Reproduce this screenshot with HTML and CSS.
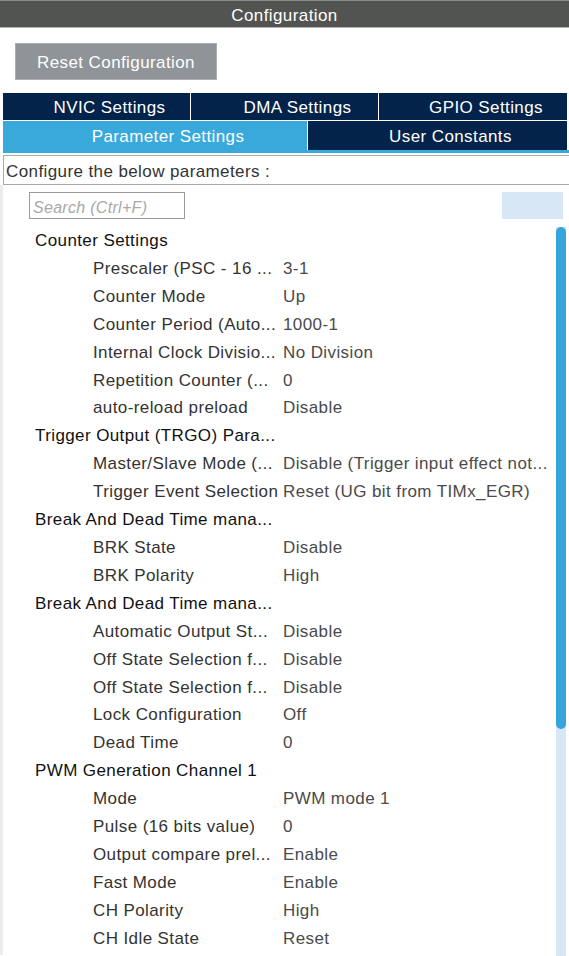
FILE: index.html
```html
<!DOCTYPE html>
<html>
<head>
<meta charset="utf-8">
<link rel="stylesheet" href="styles.css">
</head>
<body>
<div class="titlebar">Configuration</div>
<div class="toolbar"><button class="reset">Reset Configuration</button></div>
<div class="tabs">
  <div class="tabrow row1">
    <div class="tab">NVIC Settings</div>
    <div class="tab">DMA Settings</div>
    <div class="tab">GPIO Settings</div>
  </div>
  <div class="tabrow row2">
    <div class="tab active">Parameter Settings</div>
    <div class="tab">User Constants</div>
  </div>
</div>
<div class="configure">Configure the below parameters :</div>
<div class="panel">
  <div class="searchrow">
    <div class="search">Search (Ctrl+F)</div>
    <div class="searchbtn"></div>
  </div>
  <div class="content">
    <div class="list">
      <div class="group">Counter Settings</div>
      <div class="item"><span class="lbl">Prescaler (PSC - 16 ...</span><span class="val">3-1</span></div>
      <div class="item"><span class="lbl">Counter Mode</span><span class="val">Up</span></div>
      <div class="item"><span class="lbl">Counter Period (Auto...</span><span class="val">1000-1</span></div>
      <div class="item"><span class="lbl">Internal Clock Divisio...</span><span class="val">No Division</span></div>
      <div class="item"><span class="lbl">Repetition Counter (...</span><span class="val">0</span></div>
      <div class="item"><span class="lbl">auto-reload preload</span><span class="val">Disable</span></div>
      <div class="group">Trigger Output (TRGO) Para...</div>
      <div class="item"><span class="lbl">Master/Slave Mode (...</span><span class="val">Disable (Trigger input effect not...</span></div>
      <div class="item"><span class="lbl">Trigger Event Selection</span><span class="val">Reset (UG bit from TIMx_EGR)</span></div>
      <div class="group">Break And Dead Time mana...</div>
      <div class="item"><span class="lbl">BRK State</span><span class="val">Disable</span></div>
      <div class="item"><span class="lbl">BRK Polarity</span><span class="val">High</span></div>
      <div class="group">Break And Dead Time mana...</div>
      <div class="item"><span class="lbl">Automatic Output St...</span><span class="val">Disable</span></div>
      <div class="item"><span class="lbl">Off State Selection f...</span><span class="val">Disable</span></div>
      <div class="item"><span class="lbl">Off State Selection f...</span><span class="val">Disable</span></div>
      <div class="item"><span class="lbl">Lock Configuration</span><span class="val">Off</span></div>
      <div class="item"><span class="lbl">Dead Time</span><span class="val">0</span></div>
      <div class="group">PWM Generation Channel 1</div>
      <div class="item"><span class="lbl">Mode</span><span class="val">PWM mode 1</span></div>
      <div class="item"><span class="lbl">Pulse (16 bits value)</span><span class="val">0</span></div>
      <div class="item"><span class="lbl">Output compare prel...</span><span class="val">Enable</span></div>
      <div class="item"><span class="lbl">Fast Mode</span><span class="val">Enable</span></div>
      <div class="item"><span class="lbl">CH Polarity</span><span class="val">High</span></div>
      <div class="item"><span class="lbl">CH Idle State</span><span class="val">Reset</span></div>
    </div>
    <div class="scrolltrack"><div class="thumb"></div></div>
  </div>
</div>
</body>
</html>
```

FILE: styles.css
```css
html, body {
  margin: 0;
  padding: 0;
  background: #ffffff;
  font-family: "Liberation Sans", Arial, sans-serif;
  font-size: 17px;
  letter-spacing: 0.4px;
  width: 569px;
  height: 956px;
  overflow: hidden;
}

.titlebar {
  height: 26px;
  background: #525452;
  border-top: 1px solid #8c8c8c;
  border-bottom: 1px solid #b5b5b5;
  color: #ffffff;
  text-align: center;
  line-height: 29px;
  overflow: hidden;
}

.toolbar {
  padding: 15px 0 0 15px;
}

.reset {
  display: block;
  width: 202px;
  height: 37px;
  margin: 0;
  background: #8f9498;
  border: 1px solid #a9adb0;
  color: #ffffff;
  font-family: "Liberation Sans", Arial, sans-serif;
  font-size: 17px;
  letter-spacing: 0.4px;
  padding: 2px 0 0 0;
}

.tabs {
  margin: 13px 0 0 3px;
  border-bottom: 3px solid #39a9dc;
}

.tabrow {
  display: flex;
}

.row1 {
  height: 27px;
  gap: 1px;
  border-bottom: 1px solid #ffffff;
}

.row2 {
  height: 29px;
  gap: 1px;
}

.tab {
  background: #03234b;
  color: #ffffff;
  display: flex;
  align-items: center;
  justify-content: center;
  padding: 3px 0 0 26px;
  box-sizing: border-box;
}

.row1 .tab:nth-child(1) { width: 187px; }
.row1 .tab:nth-child(2) { width: 187px; }
.row1 .tab:nth-child(3) { width: 188px; }

.row2 .tab:nth-child(1) { width: 304px; }
.row2 .tab:nth-child(2) { width: 259px; }

.tab.active {
  background: #39a9dc;
}

.configure {
  margin: 2px 0 0 3px;
  height: 28px;
  border: 1px solid #aaaaaa;
  border-right: none;
  line-height: 32px;
  padding-left: 2px;
  color: #333333;
  overflow: hidden;
}

.panel {
  border-left: 3px solid #ececec;
  height: 770px;
}

.searchrow {
  display: flex;
  justify-content: space-between;
  padding: 7px 6px 0 26px;
}

.search {
  width: 151px;
  height: 25px;
  border: 1px solid #9a9a9a;
  color: #a8a8a8;
  font-style: italic;
  font-size: 16px;
  letter-spacing: 0.3px;
  line-height: 29px;
  padding-left: 3px;
  overflow: hidden;
}

.searchbtn {
  width: 61px;
  height: 27px;
  background: #d7e7f5;
}

.content {
  display: flex;
  margin-top: 6px;
}

.list {
  flex: 1;
  padding-top: 2px;
}

.group {
  height: 27.92px;
  line-height: 27.92px;
  padding-left: 32px;
  color: #111111;
}

.item {
  height: 27.92px;
  line-height: 27.92px;
  display: flex;
  color: #333333;
}

.lbl {
  width: 190px;
  padding-left: 90px;
  flex-shrink: 0;
  white-space: nowrap;
  overflow: hidden;
}

.val {
  color: #4a4a4a;
  white-space: nowrap;
}

.scrolltrack {
  width: 10px;
  margin-right: 3px;
  margin-top: 2px;
  height: 730px;
  background: #d7e7f5;
}

.thumb {
  height: 502px;
  background: #34a6db;
  border-radius: 5px;
}
```
